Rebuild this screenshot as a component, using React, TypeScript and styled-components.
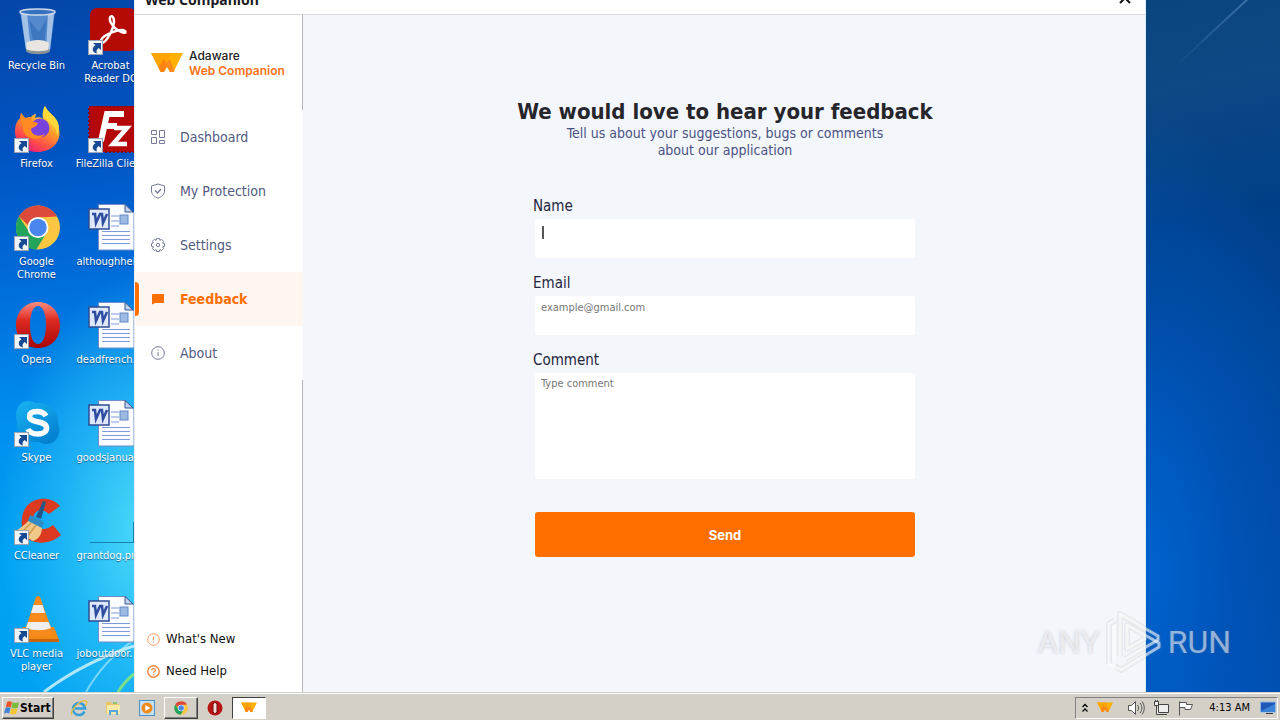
import React from "react";
import styled, { createGlobalStyle, css } from "styled-components";

const UI_FONT = `"DejaVu Sans Condensed", "Noto Sans", sans-serif`;
const BODY_FONT = `"Noto Sans", "Open Sans", sans-serif`;

const GlobalStyle = createGlobalStyle`
  * { box-sizing: border-box; }
  body { margin: 0; font-family: ${BODY_FONT}; }
  svg { display: block; flex: none; }
`;

/* ---------- Desktop ---------- */

const Screen = styled.div`
  position: relative;
  display: flex;
  flex-direction: column;
  min-height: 100vh;
  overflow: hidden;
`;

const Desktop = styled.div`
  flex: 1;
  display: grid;
  grid-template-columns: 134px minmax(0, 1fr) 134px;
`;

const IconPane = styled.div`
  position: relative;
  overflow: hidden;
  display: flex;
  padding-top: 8px;
  background:
    radial-gradient(ellipse 150px 260px at 150px 530px, rgba(84, 222, 250, 0.95), rgba(60, 205, 248, 0.5) 55%, rgba(40, 190, 245, 0) 100%),
    linear-gradient(172deg, #0546a8 0%, #0054c2 22%, #006fdc 42%, #0090ee 60%, #00a2f4 80%, #00a0f2 100%);
`;

const LightRays = styled.svg`
  position: absolute;
  left: 0;
  bottom: 0;
`;

const IconColumn = styled.div`
  position: relative;
  flex: none;
  display: flex;
  flex-direction: column;
  width: 75px;
  &:first-of-type { width: 73px; }
`;

const Shortcut = styled.div`
  display: flex;
  flex-direction: column;
  align-items: center;
  gap: 3px;
  height: 98px;
  &:last-child { height: 80px; }
`;

const ShortcutLabel = styled.span<{ $file?: boolean }>`
  width: 72px;
  font: 11px/13px ${UI_FONT};
  color: #fff;
  text-align: center;
  text-shadow: 0 1px 1px rgba(0, 30, 80, 0.6);
  white-space: pre;
  ${(p) => p.$file && css`
    text-align: left;
    padding-left: 2px;
  `}
`;

const Wallpaper = styled.div`
  position: relative;
  overflow: hidden;
  background:
    radial-gradient(ellipse 180px 460px at 0 570px, rgba(0, 100, 210, 0.95), rgba(0, 90, 196, 0.5) 50%, rgba(0, 80, 180, 0) 100%),
    linear-gradient(168deg, #0a4580 0%, #0e4884 12%, #003f88 32%, #00469a 55%, #004dac 100%);
`;

const Arrow = () => (
  <g>
    <rect x="1.500" y="32.500" width="14" height="14" fill="#f2f5fa" stroke="#9aa4b4" />
    <path d="M6 35h8v7l-2.400-2c-2 1.600-2.600 3.200-1.600 5.500-4.600-.6-6-5.500-1.500-8.200z" fill="#174a92" />
  </g>
);

const Glyph = ({ children }: { children: React.ReactNode }) => (
  <svg width="48" height="48" viewBox="0 0 48 48" aria-hidden="true">{children}</svg>
);

const Bin = () => (
  <Glyph>
    <path d="M7 3h35l-5 40c-4 3-20 3-24 0z" fill="#6fa0d8" opacity=".75" />
    <path d="M8 5h6l4 38-5-1zM35 5h6l-4 37-4 1z" fill="#dbe8f6" opacity=".6" />
    <path d="M16 12l10 12 8-14-3 26-10 2z" fill="#2b66b4" opacity=".55" />
    <path d="M13 35c6-4 18-4 23 0l-1 7c-5 3-17 3-21 0z" fill="#e9e6e2" />
    <path d="M13 41c5 3 19 3 24 0l-.5 3c-5 3-18 3-23 0z" fill="#8b9097" />
    <ellipse cx="24.500" cy="4" rx="17.500" ry="3" fill="#3672bf" stroke="#cfdae6" strokeWidth="1.500" />
  </Glyph>
);

const Firefox = () => (
  <Glyph>
    <defs>
      <linearGradient id="ffx" x1=".8" y1=".1" x2=".3" y2="1">
        <stop offset="0" stopColor="#fff14a" /><stop offset=".4" stopColor="#ff9a2a" />
        <stop offset=".75" stopColor="#ff4a4a" /><stop offset="1" stopColor="#e31a80" />
      </linearGradient>
    </defs>
    <path d="M32 0c2 5 7 8 10 12 3 3 4 7 4 11 3 12-7 23-21 23S1 36 2 24c0-5 2-9 5-12l1-5 4 5 6-1c1-1 3-3 5-3l-1 4c3-1 6-1 8 1-1-5 0-10 2-13z" fill="url(#ffx)" />
    <circle cx="27" cy="22" r="9.500" fill="#7a42dc" />
    <path d="M7 12l1-5 4 5 7-1-1 4 7 2c-1 4-5 4-7 6 0 5 6 9 14 5-6 9-21 5-22-5-1-4-1-7-3-11z" fill="#ff8b22" />
    <path d="M32 0c2 5 7 8 10 12 4 5 5 12 2 18 0-9-6-12-10-16-4-4-4-9-2-14z" fill="#ffd93a" />
    <Arrow />
  </Glyph>
);

const Chrome = ({ size = 48, arrow = true }: { size?: number; arrow?: boolean }) => (
  <svg width={size} height={size} viewBox={arrow ? "0 0 48 48" : "2 1 45 45"} aria-hidden="true">
    <circle cx="25" cy="23.500" r="22" fill="#fbc642" />
    <path d="M5.900 12.500A22 22 0 0 1 44 12.600l-19 .9c-6 0-9 4-9.500 8z" fill="#dc4a3d" />
    <path d="M5.900 12.500a22 22 0 0 0 17.500 33L33 29.500a10 10 0 0 1-16.500-1z" fill="#22a45a" />
    <circle cx="25" cy="23.500" r="10.500" fill="#fff" />
    <circle cx="25" cy="23.500" r="8.700" fill="#4a86ee" />
    {arrow && <Arrow />}
  </svg>
);

const Opera = () => (
  <Glyph>
    <defs>
      <linearGradient id="opr" x1="0" y1="0" x2="0" y2="1">
        <stop offset="0" stopColor="#ff8d80" /><stop offset=".4" stopColor="#dc2a22" /><stop offset="1" stopColor="#a80606" />
      </linearGradient>
    </defs>
    <path fillRule="evenodd" d="M25 0C12 0 3 10 3 23.500S12 46 25 46s22-9 22-22.500S38 0 25 0zm0 4c5 0 8 8 8 19s-3 19-8 19-8-8-8-19 3-19 8-19z" fill="url(#opr)" />
    <Arrow />
  </Glyph>
);

const Skype = () => (
  <Glyph>
    <defs>
      <linearGradient id="sky" x1="0" y1="0" x2=".6" y2="1">
        <stop offset="0" stopColor="#18b4f4" /><stop offset="1" stopColor="#0482d0" />
      </linearGradient>
    </defs>
    <path d="M15 1c4 0 6 1 8 2 14-1 23 8 22 21 4 8-1 20-11 20-4 0-6-1-8-2C13 43 3 34 4 21 1 12 6 1 15 1z" fill="url(#sky)" />
    <path d="M33 16c-2-3.500-5-4.500-9-4.500-5 0-7.500 1.800-7.500 5 0 7 17 3.500 17 11.500 0 4-4 6-8.500 6-5 0-8.500-1.500-10-5" fill="none" stroke="#fff" strokeWidth="5.500" />
    <Arrow />
  </Glyph>
);

const Cleaner = () => (
  <Glyph>
    <path d="M47 8C38-2 22-1 14 8S7 36 17 42c10 5 22 3 31-5l-8-10c-6 5-13 5-17 1s-4-10 0-14c4-3 9-2 13 2z" fill="#dc3a20" />
    <path d="M16 22l13 7c0 7-3 12-9 14L3 33c4-3 9-6 13-11z" fill="#f2c888" />
    <path d="M8 35l10-10M14 39l9-12" stroke="#d29a50" strokeWidth="1.500" />
    <path d="M17 17l14 7-2 6-14-7z" fill="#2f8bc4" />
    <path d="M23 19L30 3l3 1-5 17z" fill="#24568a" />
    <Arrow />
  </Glyph>
);

const Vlc = () => (
  <Glyph>
    <path d="M10 31h31l5 13H4z" fill="#f08a16" />
    <path d="M4 43h42v3H4z" fill="#c96408" />
    <path d="M23 1q2-2 4 0l13 36c-6 5-24 5-29 0z" fill="#f98a1c" />
    <path d="M20.500 9h9l2.500 8H18zM15 26h20.500l2.500 6c-7 3-18 3-25 0z" fill="#efefef" />
    <Arrow />
  </Glyph>
);

const Acrobat = () => (
  <Glyph>
    <rect x="3" y="0" width="46" height="43" rx="7" fill="#b40b05" />
    <path d="M14 32c3-6 20-12 24-9 3 4-9 1-14-8-4-8 3-9 3-2 0 7-7 21-12 22-2 0-2-1-1-3z" fill="none" stroke="#fff" strokeWidth="2.500" strokeLinejoin="round" />
    <Arrow />
  </Glyph>
);

const FileZilla = () => (
  <Glyph>
    <rect x="2" y="0" width="48" height="46" fill="#b40808" stroke="#7c0c18" strokeWidth="2" strokeDasharray="2 2" />
    <path d="M14 35l6-27h17M17 20h13" fill="none" stroke="#fff" strokeWidth="6" />
    <path d="M27 22h13L26 38h14" fill="none" stroke="#fff" strokeWidth="4.500" />
    <Arrow />
  </Glyph>
);

const Doc = () => (
  <Glyph>
    <path d="M11.500.500h27L47 9v37H11.500z" fill="#fbfcff" stroke="#6f8cc8" />
    <path d="M38 .5V8h8z" fill="#c3d4ee" stroke="#34548c" />
    <path d="M24 12h8M24 17h8M24 22h8M15 27.500h28M15 31.500h28M15 35.500h28M15 39.500h28" stroke="#7d9bdc" />
    <rect x="33" y="11" width="8" height="9" fill="#9dbbe2" stroke="#6387c4" />
    <rect x="2" y="5" width="20" height="20" fill="#dfe8fa" stroke="#2e4c92" strokeWidth="1.500" />
    <path d="M5 10h3l1 9 4-9h2l1 9 4-9" fill="none" stroke="#2c4da0" strokeWidth="2.500" />
  </Glyph>
);

const BlankDoc = () => (
  <Glyph>
    <path d="M3 44.500h44M46.500 24v20" stroke="#157fae" fill="none" />
  </Glyph>
);

/* ---------- Application window ---------- */

const AppWindow = styled.main`
  display: flex;
  flex-direction: column;
  background: #f3f6fa;
  border-left: 1px solid #e4eef8;
  border-right: 1px solid #d9ecfa;
`;

const TitleBar = styled.header`
  display: flex;
  justify-content: space-between;
  align-items: flex-end;
  height: 15px;
  padding: 0 12px 6px 10px;
  overflow: hidden;
  background: #fff;
  border-bottom: 1px solid #d8d8dc;
  color: #1a1a24;
  font: bold 14px/16px ${BODY_FONT};
`;

const CloseButton = styled.button`
  display: flex;
  border: 0;
  padding: 0 2px 4px;
  background: none;
  color: #111;
`;

const WindowBody = styled.div`
  flex: 1;
  display: flex;
`;

const Sidebar = styled.aside`
  flex: none;
  display: flex;
  flex-direction: column;
  width: 168px;
  background: linear-gradient(#b4b4b8, #b4b4b8) right / 1px 100% no-repeat #fff;
`;

const Brand = styled.div`
  display: flex;
  align-items: center;
  gap: 6px;
  height: 95px;
  padding-left: 16px;
  font: 500 12px/15px Inter, sans-serif;
  color: #222;
`;

const BrandName = styled.div`
  display: flex;
  flex-direction: column;
  strong { font-weight: 600; color: #f97316; }
`;

const Nav = styled.nav`
  display: flex;
  flex-direction: column;
`;

const NavLink = styled.a<{ $active?: boolean }>`
  position: relative;
  display: flex;
  align-items: center;
  gap: 14px;
  height: 54px;
  padding-left: 15px;
  background: ${(p) => (p.$active ? "#fff5f1" : "#fff")};
  color: ${(p) => (p.$active ? "#ff6f00" : "#535a80")};
  font: ${(p) => (p.$active ? "bold" : "normal")} 14px/18px ${UI_FONT};
  text-decoration: none;
  svg { opacity: ${(p) => (p.$active ? 1 : 0.8)}; }
  ${(p) => p.$active && css`
    &::before {
      content: "";
      position: absolute;
      left: 0;
      top: 10px;
      width: 4px;
      height: 34px;
      border-radius: 0 4px 4px 0;
      background: #ff6f00;
    }
  `}
`;

const SideLinks = styled.div`
  display: flex;
  flex-direction: column;
  gap: 16px;
  margin-top: auto;
  padding: 0 0 13px 12px;
`;

const SideLink = styled.a`
  display: flex;
  align-items: center;
  gap: 6px;
  color: #111;
  font: 13px/16px ${UI_FONT};
  text-decoration: none;
`;

const BrandMark = ({ width = 32 }: { width?: number }) => (
  <svg width={width} height={Math.round(width * 0.7)} viewBox="0 0 32 22" aria-hidden="true">
    <path d="M0 1h32L22.500 20h-3.500l-3-5-3 5h-3.500z" fill="#ffb000" />
    <path d="M0 1h20l-5 9-8 4z" fill="#ffa000" opacity=".7" />
    <path d="M13 7l3.500 6L13 20H9.500L7.500 15z" fill="#ff8413" />
    <path d="M18.500 7l5 11-1 2H19l-4.500-8z" fill="#ff8a1c" />
  </svg>
);

const NavIcon = ({ children }: { children: React.ReactNode }) => (
  <svg width="16" height="16" viewBox="0 0 16 16" aria-hidden="true" fill="none" stroke="currentColor">{children}</svg>
);

const navItems = [
  { label: "Dashboard", icon: <NavIcon><path d="M1.500 1.500h5v4h-5zM9.500 1.500h5v7h-5zM1.500 8.500h5v6h-5zM9.500 11.500h5v3h-5z" /></NavIcon> },
  { label: "My Protection", icon: <NavIcon><path d="M8 1l6.500 2v5c0 3.500-3 5.800-6.500 7.200C4.500 13.800 1.500 11.500 1.500 8V3z" /><path d="M5 7.500L7.500 10 11 6" strokeWidth="1.400" /></NavIcon> },
  { label: "Settings", icon: <NavIcon><path d="M6.600 1.400h2.800l.5 1.900 1.700-1 2 2-1 1.700 1.900.6v2.800l-1.900.5 1 1.700-2 2-1.700-1-.5 1.900H6.600l-.5-1.900-1.700 1-2-2 1-1.700-1.900-.5V6.600l1.900-.6-1-1.700 2-2 1.700 1z" strokeLinejoin="round" /><circle cx="8" cy="8" r="1.700" /></NavIcon> },
  { label: "Feedback", active: true, icon: <NavIcon><path d="M2.500 3.500h11v8H5L2.500 13z" fill="currentColor" strokeLinejoin="round" /></NavIcon> },
  { label: "About", icon: <NavIcon><circle cx="8" cy="8" r="6.300" /><path d="M8 7v4M8 4.500v1.200" /></NavIcon> },
];

/* ---------- Feedback form ---------- */

const Content = styled.section`
  flex: 1;
  display: flex;
  flex-direction: column;
  align-items: center;
  padding: 84px 0 0 2px;
`;

const Heading = styled.h1`
  margin: 0;
  color: #25252b;
  font: bold 22px/26px ${UI_FONT};
`;

const Intro = styled.p`
  margin: 0;
  color: #4a5284;
  font: 14px/17px ${UI_FONT};
  text-align: center;
`;

const Form = styled.form`
  display: flex;
  flex-direction: column;
  width: 380px;
  margin-top: 38px;
`;

const Field = styled.div`
  display: flex;
  flex-direction: column;
  gap: 4px;
  margin-bottom: 16px;
  label {
    margin-left: -2px;
    color: #25253f;
    font: 15px/18px ${UI_FONT};
  }
`;

const boxStyle = css`
  display: block;
  width: 100%;
  margin: 0;
  border: 0;
  border-radius: 2px;
  outline: 0;
  background-color: #fff;
  color: #333;
  font: 11px/14px ${UI_FONT};
  &::placeholder { color: #767676; opacity: 1; }
`;

const TextInput = styled.input<{ $caret?: boolean }>`
  ${boxStyle}
  height: 39px;
  padding: 4px 6px 20px;
  ${(p) => p.$caret && css`
    background-image: linear-gradient(#555, #555);
    background-position: 7px 7px;
    background-size: 2px 13px;
    background-repeat: no-repeat;
  `}
`;

const TextArea = styled.textarea`
  ${boxStyle}
  height: 106px;
  padding: 4px 6px;
  resize: none;
`;

const SendButton = styled.button`
  height: 45px;
  margin-top: 17px;
  border: 0;
  border-radius: 3px;
  background: #ff6f00;
  color: #fff;
  font: bold 13px/18px Inter, sans-serif;
`;

/* ---------- Taskbar ---------- */

const Taskbar = styled.footer`
  flex: none;
  display: flex;
  align-items: center;
  height: 28px;
  padding: 2px 2px 0;
  border-top: 1px solid #d4d0c8;
  box-shadow: inset 0 1px 0 #fff;
  background: #d4d0c8;
`;

const raised = css`
  border: 1px solid;
  border-color: #fff #404040 #404040 #fff;
  box-shadow: inset -1px -1px 0 #808080;
`;

const StartButton = styled.button`
  ${raised}
  display: flex;
  align-items: center;
  width: 52px;
  height: 22px;
  padding: 0 1px;
  background: #d4d0c8;
  color: #000;
  font: bold 12px/14px ${UI_FONT};
`;

const QuickLaunch = styled.div`
  display: flex;
  align-items: center;
  margin-left: 8px;
`;

const TaskButton = styled.button<{ $state?: "open" | "pressed" }>`
  display: flex;
  align-items: center;
  justify-content: center;
  width: 34px;
  height: 22px;
  padding: 0;
  border: 1px solid transparent;
  background: none;
  ${(p) => p.$state === "open" && raised}
  ${(p) => p.$state === "pressed" && css`
    border-color: #404040 #fff #fff #404040;
    background: #fff;
  `}
`;

const Tray = styled.div`
  display: flex;
  align-items: center;
  gap: 8px;
  height: 22px;
  margin-left: auto;
  padding: 0 1px 0 5px;
  border: 1px solid;
  border-color: #808080 #fff #fff #808080;
  color: #000;
  font: 11px/14px ${UI_FONT};
`;

const TrayApp = styled.span`
  margin-right: 6px;
`;

const Clock = styled.time`
  margin: 0 2px 0 8px;
`;

const WindowsFlag = () => (
  <svg width="16" height="16" viewBox="0 0 16 16" aria-hidden="true">
    <path d="M3 2c2-1 3-1 5 0L6.800 7.500C5 6.500 3.500 6.500 1.800 7.500z" fill="#e8532a" />
    <path d="M8.500 2.300c2 1 4 1 6.500-.3L13.800 7.700c-2 1-4 1-6.300 0z" fill="#7cba3c" />
    <path d="M1.500 8c2-1 3-1 5 0l-1.300 5.500c-2-1-3.500-1-5.200 0z" fill="#3d82d4" />
    <path d="M7.200 8.300c2 1 4 1 6.300 0l-1.300 5.500c-2 1-4 1-6.200 0z" fill="#f8c532" />
  </svg>
);

const Explorer = () => (
  <svg width="18" height="18" viewBox="0 0 18 18" aria-hidden="true" fill="none">
    <path d="M14.500 12.500A6 6 0 1 1 15 9.500H5" stroke="#359fdb" strokeWidth="2.500" />
    <path d="M2 16C-1 12 11 0 16 2c2 2-1 5-1 5" stroke="#e9b93a" strokeWidth="1.300" />
  </svg>
);

const Folder = () => (
  <svg width="16" height="16" viewBox="0 0 16 16" aria-hidden="true">
    <path d="M1 2h5l1 2h7v10H1z" fill="#e9c767" /><path d="M2 5h13v9H2z" fill="#f8e9a8" />
    <path d="M4 15v-5h9v5h-2v-3H6v3z" fill="#58a8da" /><path d="M8 2h4v2H8z" fill="#8ec36b" />
  </svg>
);

const Media = () => (
  <svg width="16" height="16" viewBox="0 0 16 16" aria-hidden="true">
    <rect x=".5" y=".5" width="15" height="15" fill="#c6e0f4" stroke="#4b90c8" />
    <circle cx="8" cy="8" r="5.500" fill="#f18a1c" /><path d="M6.300 5l5 3-5 3z" fill="#fff" />
  </svg>
);

const OperaSmall = () => (
  <svg width="16" height="16" viewBox="0 0 16 16" aria-hidden="true">
    <circle cx="8" cy="8" r="7.500" fill="#b91414" /><rect x="6" y="2.500" width="4" height="11" rx="2" fill="#f4dada" stroke="#6d0606" />
  </svg>
);

/* ---------- Watermark ---------- */

const Watermark = styled.div`
  position: absolute;
  right: 49px;
  bottom: 46px;
  display: flex;
  align-items: center;
  gap: 5px;
  color: rgba(255, 255, 255, 0.55);
  font: 32px/64px Roboto, sans-serif;
  text-shadow: 0 0 3px rgba(110, 110, 125, 0.35);
  pointer-events: none;
`;

const columns = [
  [
    { label: "Recycle Bin", icon: <Bin /> },
    { label: "Firefox", icon: <Firefox /> },
    { label: "Google\nChrome", icon: <Chrome /> },
    { label: "Opera", icon: <Opera /> },
    { label: "Skype", icon: <Skype /> },
    { label: "CCleaner", icon: <Cleaner /> },
    { label: "VLC media\nplayer", icon: <Vlc /> },
  ],
  [
    { label: "Acrobat\nReader DC", icon: <Acrobat /> },
    { label: "FileZilla Client", icon: <FileZilla /> },
    { label: "althoughhel", icon: <Doc />, file: true },
    { label: "deadfrench.", icon: <Doc />, file: true },
    { label: "goodsjanua", icon: <Doc />, file: true },
    { label: "grantdog.pn", icon: <BlankDoc />, file: true },
    { label: "joboutdoor.", icon: <Doc />, file: true },
  ],
];

export default function App() {
  return (
    <Screen>
      <GlobalStyle />
      <Desktop>
        <IconPane>
          <LightRays width="134" height="60" viewBox="0 0 134 60" aria-hidden="true" fill="none">
            <path d="M44 60Q84 30 134 14" stroke="#d9f6ff" strokeWidth="3" opacity=".8" />
            <path d="M86 60Q104 28 134 8" stroke="#bdf0ff" strokeWidth="2" opacity=".6" />
            <path d="M118 60q6-10 16-18" stroke="#7be08a" strokeWidth="3" />
          </LightRays>
          {columns.map((items, i) => (
            <IconColumn key={i}>
              {items.map((item) => (
                <Shortcut key={item.label}>
                  {item.icon}
                  <ShortcutLabel $file={"file" in item}>{item.label}</ShortcutLabel>
                </Shortcut>
              ))}
            </IconColumn>
          ))}
        </IconPane>

        <AppWindow>
          <TitleBar>
            <span>Web Companion</span>
            <CloseButton aria-label="Close">
              <svg width="12" height="12" viewBox="0 0 12 12" fill="none" stroke="currentColor" strokeWidth="2"><path d="M1 1l10 10M11 1L1 11" /></svg>
            </CloseButton>
          </TitleBar>
          <WindowBody>
            <Sidebar>
              <Brand>
                <BrandMark />
                <BrandName><span>Adaware</span><strong>Web Companion</strong></BrandName>
              </Brand>
              <Nav>
                {navItems.map((n) => (
                  <NavLink key={n.label} href="#" $active={n.active}>{n.icon}<span>{n.label}</span></NavLink>
                ))}
              </Nav>
              <SideLinks>
                <SideLink href="#">
                  <svg width="13" height="13" viewBox="0 0 13 13" fill="none" stroke="#ff9b5e" aria-hidden="true"><circle cx="6.500" cy="6.500" r="5.800" /><path d="M6.500 3.500v3.800M6.500 8.500v1.200" /></svg>
                  What's New
                </SideLink>
                <SideLink href="#">
                  <svg width="13" height="13" viewBox="0 0 13 13" fill="none" stroke="#f58345" aria-hidden="true"><circle cx="6.500" cy="6.500" r="5.700" strokeWidth="1.400" /><path d="M4.500 5.200c.2-2 4-2 4 0 0 1.400-2 1.300-2 2.600M6.500 9v1.200" strokeWidth="1.200" /></svg>
                  Need Help
                </SideLink>
              </SideLinks>
            </Sidebar>

            <Content>
              <Heading>We would love to hear your feedback</Heading>
              <Intro>Tell us about your suggestions, bugs or comments<br />about our application</Intro>
              <Form onSubmit={(e) => e.preventDefault()}>
                <Field>
                  <label htmlFor="name">Name</label>
                  <TextInput id="name" type="text" $caret />
                </Field>
                <Field>
                  <label htmlFor="email">Email</label>
                  <TextInput id="email" type="email" placeholder="example@gmail.com" />
                </Field>
                <Field>
                  <label htmlFor="comment">Comment</label>
                  <TextArea id="comment" placeholder="Type comment" />
                </Field>
                <SendButton type="submit">Send</SendButton>
              </Form>
            </Content>
          </WindowBody>
        </AppWindow>

        <Wallpaper>
          <svg width="134" height="70" viewBox="0 0 134 70" aria-hidden="true">
            <defs>
              <linearGradient id="ray" x1="1" y1="0" x2="0" y2="1">
                <stop offset="0" stopColor="#5f8fc0" stopOpacity=".6" /><stop offset="1" stopColor="#5f8fc0" stopOpacity="0" />
              </linearGradient>
            </defs>
            <path d="M30 66Q66 32 104-3" stroke="url(#ray)" strokeWidth="2" fill="none" />
          </svg>
        </Wallpaper>
      </Desktop>

      <Taskbar>
        <StartButton><WindowsFlag />Start</StartButton>
        <QuickLaunch>
          <TaskButton aria-label="Internet Explorer"><Explorer /></TaskButton>
          <TaskButton aria-label="File Explorer"><Folder /></TaskButton>
          <TaskButton aria-label="Media Player"><Media /></TaskButton>
          <TaskButton aria-label="Chrome" $state="open"><Chrome size={14} arrow={false} /></TaskButton>
          <TaskButton aria-label="Opera"><OperaSmall /></TaskButton>
          <TaskButton aria-label="Web Companion" $state="pressed"><BrandMark width={16} /></TaskButton>
        </QuickLaunch>
        <Tray>
          <svg width="8" height="12" viewBox="0 0 8 12" fill="none" stroke="#000" strokeWidth="1.300" aria-hidden="true"><path d="M1.500 5L4 2.500 6.500 5M1.500 9.500L4 7l2.500 2.500" /></svg>
          <TrayApp><BrandMark width={16} /></TrayApp>
          <svg width="18" height="16" viewBox="0 0 18 16" fill="none" stroke="#555" aria-hidden="true"><path d="M1.500 5.500h3l4-4v13l-4-4h-3z" fill="#fff" /><path d="M10.500 5c1.500 2 1.500 4 0 6M13 3c2.500 3 2.500 7 0 10M15 1.500c3 4 3 9 0 13" /></svg>
          <svg width="16" height="16" viewBox="0 0 16 16" fill="#eee" stroke="#444" aria-hidden="true"><path d="M5.500 4.500h10v8h-10zM7 14.500h7M1.500 1.500h4v4h-4zM3.500 5.500v9H7M2.500 0v2M4.500 0v2" /></svg>
          <svg width="16" height="16" viewBox="0 0 16 16" fill="#fff" stroke="#555" aria-hidden="true"><path d="M2.500 15.500v-14M2.500 2.500h7v2h6l-2 5H8v-2H2.500" /></svg>
          <Clock>4:13 AM</Clock>
          <svg width="16" height="14" viewBox="0 0 16 14" aria-hidden="true"><rect x=".5" y="1" width="15" height="10" fill="#1f58b4" stroke="#8fb6e4" /><path d="M1 10L15 3v8H1z" fill="#3a84d8" /><path d="M6 12h7v1H6z" fill="#333" /></svg>
        </Tray>
      </Taskbar>

      <Watermark>
        <span>ANY</span>
        <svg width="58" height="64" viewBox="0 0 58 64" fill="none" stroke="#fff" strokeOpacity=".6" strokeWidth="3" strokeLinejoin="round" aria-hidden="true">
          <g stroke="#83838f" strokeOpacity=".12" strokeWidth="6">
            <path d="M4 54V14l6-4M15 46V4l38 22v4L20 49" />
            <path d="M10 56l6 4 38-23v-4L22 15v24l19-11" />
          </g>
          <path d="M4 54V14l6-4" />
          <path d="M9 50V16M15 46V4l38 22v4L20 49" />
          <path d="M4 54l12 6 38-23v-4L22 15v24l19-11" />
        </svg>
        <span>RUN</span>
      </Watermark>
    </Screen>
  );
}
